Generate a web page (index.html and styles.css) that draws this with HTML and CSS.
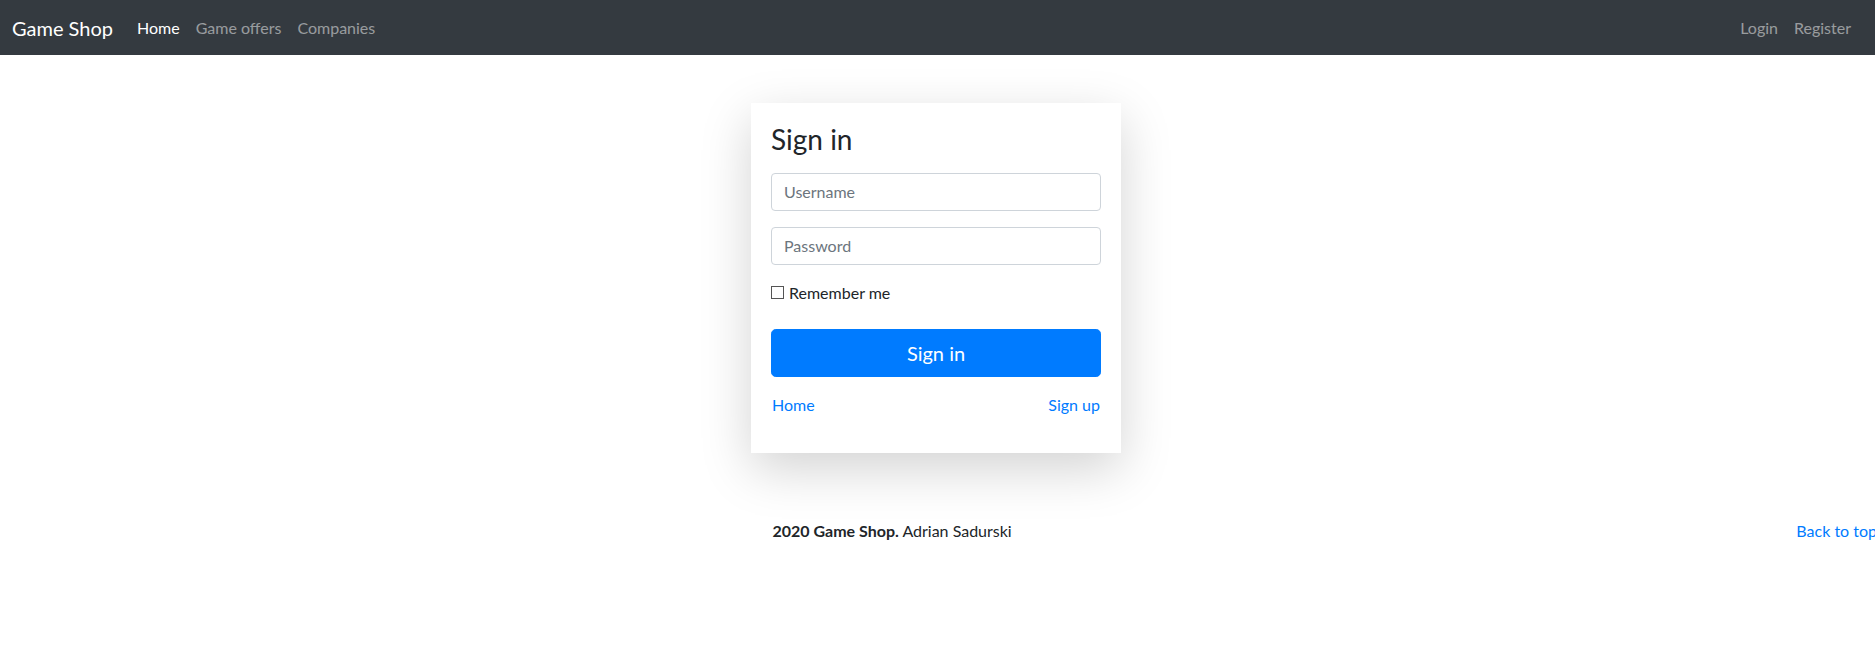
FILE: index.html
```html
<!DOCTYPE html>
<html lang="en">
<head>
<meta charset="utf-8">
<title>Game Shop - Sign in</title>
<link rel="stylesheet" href="styles.css">
</head>
<body>
<nav class="navbar">
  <a class="brand" href="#">Game Shop</a>
  <ul class="nav">
    <li><a class="nav-link active" href="#">Home</a></li>
    <li><a class="nav-link" href="#">Game offers</a></li>
    <li><a class="nav-link" href="#">Companies</a></li>
  </ul>
  <ul class="nav nav-right">
    <li><a class="nav-link" href="#">Login</a></li>
    <li><a class="nav-link" href="#">Register</a></li>
  </ul>
</nav>

<main class="main">
  <form class="signin-card">
    <h1 class="signin-title">Sign in</h1>
    <input class="field" type="text" placeholder="Username">
    <input class="field" type="password" placeholder="Password">
    <div class="check-row">
      <label class="check-label"><input class="check" type="checkbox"> Remember me</label>
    </div>
    <button class="btn-primary" type="button">Sign in</button>
    <p class="card-links">
      <a href="#">Home</a>
      <a href="#">Sign up</a>
    </p>
  </form>
</main>

<footer class="footer">
  <p class="footer-text"><b>2020 Game Shop.</b> Adrian Sadurski</p>
  <p class="footer-top"><a href="#">Back to top</a></p>
</footer>
</body>
</html>
```

FILE: styles.css
```css
* { box-sizing: border-box; }
html, body { overflow-x: hidden; }
body {
  margin: 0;
  font-family: "Lato", "Open Sans", "Liberation Sans", sans-serif;
  font-size: 16px;
  line-height: 1.5;
  color: #212529;
  background: #fff;
}
a { color: #007bff; text-decoration: none; }

.navbar {
  display: flex;
  align-items: center;
  height: 55px;
  padding: 8px 16px 8px 12px;
  background: #343a40;
}
.brand {
  color: #fff;
  font-size: 20px;
  line-height: 30px;
  margin-right: 16px;
  white-space: nowrap;
}
.nav {
  display: flex;
  list-style: none;
  margin: 0;
  padding: 0;
}
.nav-right { margin-left: auto; }
.nav-link {
  display: block;
  padding: 8px;
  color: rgba(255, 255, 255, 0.5);
}
.nav-link.active { color: #fff; }

.main { display: flex; justify-content: center; padding: 48px 3px 0 0; }
.signin-card {
  width: 370px;
  padding: 20px;
  background: #fff;
  box-shadow: 0 16px 48px rgba(0, 0, 0, 0.175);
  display: flex;
  flex-direction: column;
}
.signin-title {
  font-size: 28px;
  font-weight: 400;
  line-height: 1.2;
  margin: 0 0 16px;
}
.field {
  display: block;
  width: 100%;
  height: 38px;
  padding: 6px 12px;
  margin: 0 0 16px;
  font: inherit;
  font-size: 16px;
  color: #495057;
  border: 1px solid #ced4da;
  border-radius: 4px;
  outline: none;
}
.field::placeholder { color: #6c757d; }
.check-row { margin-bottom: 16px; }
.check-label {
  display: inline-flex;
  align-items: center;
  margin-bottom: 8px;
  line-height: 24px;
}
.check {
  appearance: none;
  -webkit-appearance: none;
  width: 13px;
  height: 13px;
  margin: 0 5px 0 0;
  border: 1px solid #555;
  background: #fff;
}
.btn-primary {
  display: block;
  width: 100%;
  height: 48px;
  padding: 8px 16px;
  font: inherit;
  font-size: 20px;
  line-height: 30px;
  color: #fff;
  background: #007bff;
  border: 1px solid #007bff;
  border-radius: 4.8px;
}
.card-links {
  display: flex;
  justify-content: space-between;
  margin: 16px 0 16px;
  padding: 0 1px;
}

.footer {
  display: flex;
  justify-content: space-between;
  margin: 66px 0 0 calc(50% - 165px);
  white-space: nowrap;
}
.footer p { margin: 0 0 16px; }
.footer-text b { font-weight: 700; }
.footer-top { margin-right: -2px !important; }
```
